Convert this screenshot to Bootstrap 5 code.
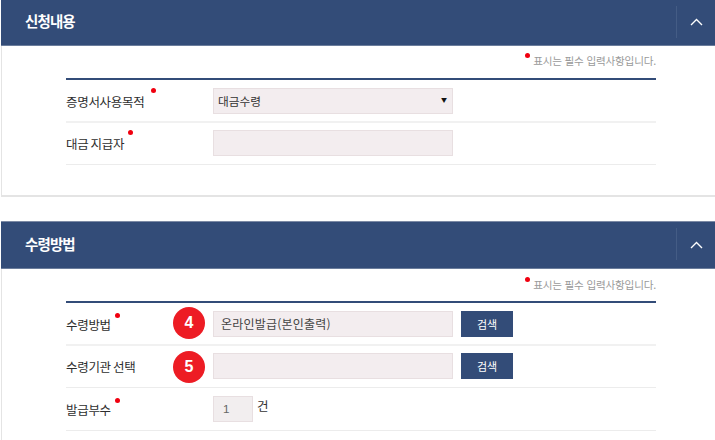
<!DOCTYPE html>
<html lang="ko">
<head>
<meta charset="utf-8">
<title>수령방법</title>
<link href="https://cdn.jsdelivr.net/npm/bootstrap@5.3.0/dist/css/bootstrap.min.css" rel="stylesheet">
<style>
html,body{height:440px;overflow:hidden;background:#fff}
body{font-family:"Noto Sans CJK KR","Liberation Sans",sans-serif;color:#333;font-size:13px;padding-left:1px}
.sec-panel{border-style:solid;border-width:0 0 2px 1px;border-color:#e4e4e4}
.sec-head{background:#334c78;height:46px;margin-left:-1px;padding:0 0 2px 24px;border-bottom:1px solid #6b7d9c}
.sec-head h2{font-size:14.5px;font-weight:700;color:#fff;margin:0 0 2px;letter-spacing:-.9px}
.sec-toggle{width:39px;height:32px;border-left:1px solid #445c85}
.sec-toggle svg{margin-top:1px}
.sec-body{padding:0 59px 30px 64px}
.req-note{height:32px;padding-top:7px;font-size:10.6px;color:#9a9a9a;line-height:14px;letter-spacing:-.2px}
.req-dot{display:inline-block;width:5px;height:5px;border-radius:50%;background:#f0000f}
.req-note .req-dot{margin-right:3px;vertical-align:7px}
.form-sheet{border-top:2px solid #334c78}
.form-line{height:43px;border-bottom:1px solid #ececec;padding-top:8px}
.form-line.first{border-bottom-width:2px;border-bottom-color:#f1f1f1}
.form-line.first + .form-line{height:42px;padding-top:7px}
.line-label{width:147px;flex:none;display:flex;align-items:flex-start;font-size:12.5px;color:#2e2e2e;padding-top:4px;line-height:20px;letter-spacing:-.3px;word-spacing:-1px}
.line-label .req-dot{margin:-4px 0 0 4px}
.line-label .req-dot.wide-gap{margin-left:7px}
.second .line-label .req-dot{margin-top:-2px}
.num-badge{width:32px;height:32px;border-radius:50%;background:#ed1c24;color:#fff;font:700 16px/32px "Liberation Sans",sans-serif;text-align:center;position:absolute;left:107px;top:5px}
.form-line.first .num-badge{top:4px}
.fake-input{width:240px;height:26px;flex:none;background:#f3edef;border:1px solid #e8dfe1;color:#333;font-size:11.7px;line-height:24px;padding:0 4px}
.fake-input.plain{padding-left:7px;font-size:12px;color:#444;letter-spacing:.2px}
.fake-input.tiny{width:40px;padding-left:9px;background:#f2eeef;color:#666;font-family:"Liberation Sans",sans-serif}
.sel-arrow{font-size:6px;line-height:22px;color:#111;padding-right:1px}
.go-btn{width:52px;height:26px;margin-left:8px;background:#334c78;color:#fff;font-size:11px;line-height:26px;text-align:center;border:0;padding:0;border-radius:0}
.unit-txt{margin-left:4px;font-size:12.5px;line-height:20px;color:#333}
.gap-block{height:24px}
.second{border-bottom:0}
.second .sec-head{height:48px;border-top:1px solid #7c8aa5}
.second .sec-head h2{margin-bottom:0}
.second .req-note{padding-top:8px}
.second .sec-body{padding-bottom:9px}
</style>
</head>
<body>
<section class="sec-panel">
  <div class="sec-head d-flex align-items-center justify-content-between">
    <h2>신청내용</h2>
    <div class="sec-toggle d-flex align-items-center justify-content-center">
      <svg width="13" height="8" viewBox="0 0 13 8" aria-hidden="true"><path d="M1 7 L6.5 1.5 L12 7" fill="none" stroke="#fff" stroke-width="1.4"/></svg>
    </div>
  </div>
  <div class="sec-body">
    <div class="req-note text-end"><span class="req-dot"></span>표시는 필수 입력사항입니다.</div>
    <div class="form-sheet">
      <div class="form-line first d-flex">
        <div class="line-label">증명서사용목적<span class="req-dot wide-gap"></span></div>
        <div class="fake-input d-flex justify-content-between"><span>대금수령</span><span class="sel-arrow">▼</span></div>
      </div>
      <div class="form-line d-flex">
        <div class="line-label">대금 지급자<span class="req-dot"></span></div>
        <div class="fake-input"></div>
      </div>
    </div>
  </div>
</section>
<div class="gap-block"></div>
<section class="sec-panel second">
  <div class="sec-head d-flex align-items-center justify-content-between">
    <h2>수령방법</h2>
    <div class="sec-toggle d-flex align-items-center justify-content-center">
      <svg width="13" height="8" viewBox="0 0 13 8" aria-hidden="true"><path d="M1 7 L6.5 1.5 L12 7" fill="none" stroke="#fff" stroke-width="1.4"/></svg>
    </div>
  </div>
  <div class="sec-body">
    <div class="req-note text-end"><span class="req-dot"></span>표시는 필수 입력사항입니다.</div>
    <div class="form-sheet">
      <div class="form-line first d-flex position-relative">
        <div class="line-label">수령방법<span class="req-dot"></span></div>
        <span class="num-badge">4</span>
        <div class="fake-input plain">온라인발급(본인출력)</div>
        <button type="button" class="btn go-btn">검색</button>
      </div>
      <div class="form-line d-flex position-relative">
        <div class="line-label">수령기관 선택</div>
        <span class="num-badge">5</span>
        <div class="fake-input"></div>
        <button type="button" class="btn go-btn">검색</button>
      </div>
      <div class="form-line d-flex">
        <div class="line-label">발급부수<span class="req-dot"></span></div>
        <div class="fake-input tiny">1</div>
        <span class="unit-txt">건</span>
      </div>
    </div>
  </div>
</section>
</body>
</html>
